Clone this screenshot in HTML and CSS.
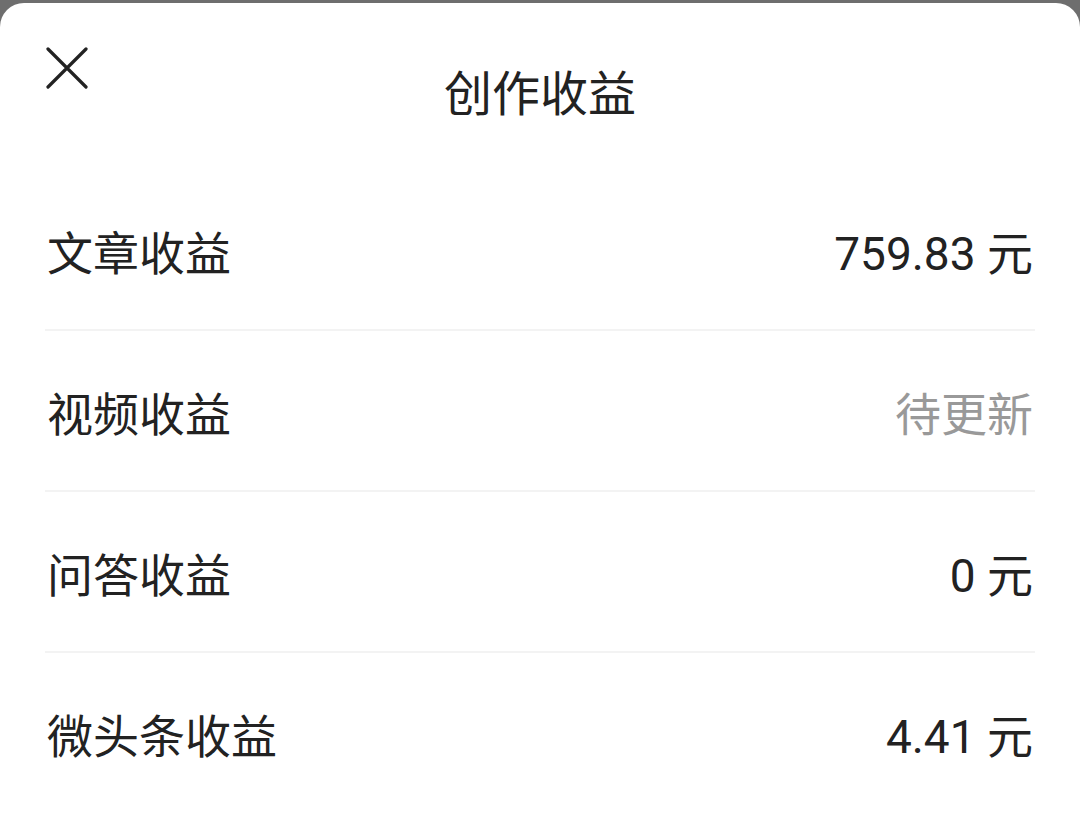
FILE: index.html
```html
<!DOCTYPE html>
<html lang="zh-CN">
<head>
    <meta charset="UTF-8">
    <title>创作收益</title>
    <meta name="viewport" content="width=device-width, initial-scale=1.0">
    <link rel="stylesheet" href="styles.css">
</head>
<body>
    <div class="sheet">
        <div class="header">
            <button class="close" aria-label="关闭">
                <svg width="42" height="42" viewBox="0 0 42 42">
                    <path d="M2 2 L40 40 M40 2 L2 40" stroke="#222" stroke-width="3.2" stroke-linecap="round" fill="none"/>
                </svg>
            </button>
            <div class="title">创作收益</div>
        </div>
        <div class="list">
            <div class="row">
                <span class="label">文章收益</span>
                <span class="value">759.83 元</span>
            </div>
            <div class="row">
                <span class="label">视频收益</span>
                <span class="value pending">待更新</span>
            </div>
            <div class="row">
                <span class="label">问答收益</span>
                <span class="value">0 元</span>
            </div>
            <div class="row last">
                <span class="label">微头条收益</span>
                <span class="value">4.41 元</span>
            </div>
        </div>
    </div>
</body>
</html>
```

FILE: styles.css
```css
html, body {
    height: 100%;
}
body {
    margin: 0;
    background: #6e6e6e;
    font-family: Roboto, "Noto Sans CJK SC", sans-serif;
    color: #222;
    overflow: hidden;
}
.sheet {
    background: #fff;
    margin-top: 3px;
    height: calc(100% - 3px);
    border-radius: 24px 24px 0 0;
}
.header {
    position: relative;
    height: 167px;
}
.close {
    position: absolute;
    left: 46px;
    top: 44px;
    padding: 0;
    border: none;
    background: none;
    cursor: pointer;
}
.title {
    text-align: center;
    font-size: 48px;
    line-height: 48px;
    padding-top: 68px;
}
.list {
    padding: 0 45px;
}
.row {
    display: flex;
    align-items: center;
    justify-content: space-between;
    height: 159px;
    border-bottom: 2px solid #f3f3f3;
}
.row.last {
    border-bottom: none;
}
.label {
    font-size: 46px;
    padding-left: 2px;
}
.value {
    font-size: 46px;
    padding-right: 2px;
}
.pending {
    color: #999;
}
```
